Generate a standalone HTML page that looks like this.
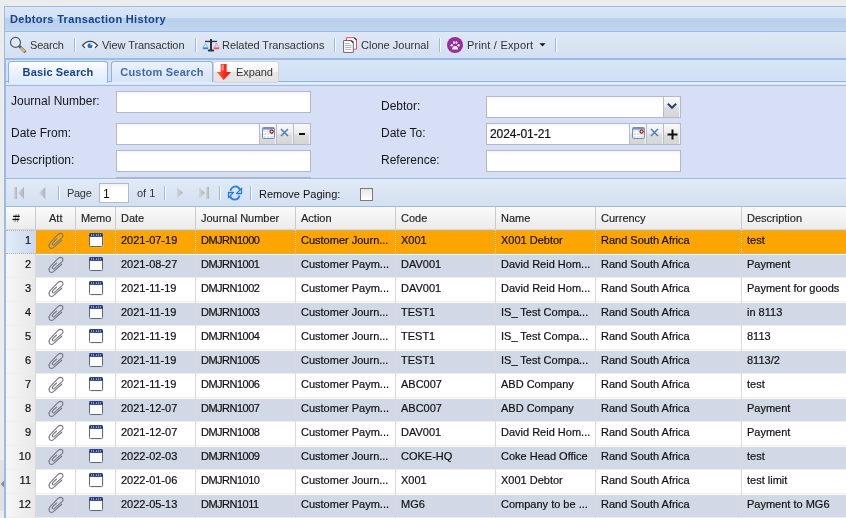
<!DOCTYPE html>
<html><head><meta charset="utf-8">
<style>
*{box-sizing:border-box}
html,body{margin:0;padding:0}
body{will-change:transform;width:846px;height:518px;overflow:hidden;position:relative;background:#ececec;font-family:"Liberation Sans",sans-serif;font-size:11px;color:#222}
.a{position:absolute}
.t{position:absolute;white-space:nowrap;line-height:13px;font-size:11px}
#hdr{left:4px;top:6px;width:860px;height:26px;border:1px solid #99bbe8;border-right:none;background:linear-gradient(#e6eef9 0,#d8e5f5 6%,#d3e1f4 44%,#bcd1ee 48%,#b8cfed 56%,#c3d6f0 100%)}
#tb{left:4px;top:32px;width:860px;height:27px;border-left:1px solid #99bbe8;border-bottom:1px solid #99bbe8;background:linear-gradient(#dfe8f5,#d3e0f2)}

#form{left:4px;top:86px;width:860px;height:93px;border-left:2px solid #99bbe8;border-bottom:1px solid #99bbe8;background:#d7dff7}
#pg{left:4px;top:179px;width:860px;height:28px;border-left:2px solid #99bbe8;border-bottom:1px solid #99bbe8;background:linear-gradient(#eef3fa 0,#e1eaf6 1px,#d3e0f1)}
#gh{left:4px;top:207px;width:860px;height:23px;border-left:2px solid #99bbe8;background:linear-gradient(#fbfbfb,#ebebeb);border-bottom:1px solid #d6d6d6}
#grid{left:4px;top:230px;width:860px;height:300px;border-left:2px solid #99bbe8;background:#fff}
.sep{position:absolute;width:2px;height:14px;border-left:1px solid #92bdf3;border-right:1px solid #fbfdff}
.tab{position:absolute;top:61px;height:22px;border:1px solid #8db2e3;border-bottom:none;border-radius:3px 3px 0 0;font-weight:bold;color:#15428b;text-align:center;line-height:20px}
.lbl{position:absolute;font-size:12px;line-height:14px;color:#161616;white-space:nowrap}
.inp{position:absolute;height:22px;border:1px solid #b5b8c8;background:linear-gradient(#f6f6f6 0,#fff 4px,#fff)}
.trg{position:absolute;width:17px;height:22px;border:1px solid #b5b8c8;border-right:none;border-left:1px solid #b8bcc8;background:linear-gradient(#fafafa 0,#ececec 45%,#dcdcdc 55%,#d6d6d6 100%);box-shadow:inset -1px 0 0 #f4f4f4}
.row{position:absolute;left:6px;width:860px;height:24px}
.cell{position:absolute;top:0;height:24px;line-height:24px;white-space:nowrap;font-size:11px;color:#222;padding-left:6px;overflow:hidden}
.vl{position:absolute;top:206px;width:1px;height:320px;background:#d0d0d0}

.r{position:absolute;left:6px;width:860px;height:24px;background:#fff;border-top:1px solid #fff;border-bottom:1px solid #ededed}
.r.alt{background:#d1d9e7}
.r.sel{background:#ffa500;border-top:1px dotted #b4b4b4;border-bottom:1px dotted #b4b4b4}
.rn{position:absolute;left:6px;width:30px;height:24px;background:linear-gradient(90deg,#f6f6f6,#e8e8e8);border-bottom:1px solid #ededed}
.rn.rns{background:linear-gradient(90deg,#e3ecf8,#c9d8ee);border-top:1px dotted #b4b4b4;border-bottom:1px dotted #b4b4b4}
.gh{color:#222;-webkit-text-stroke:0.15px #222}
.rt{color:#111;text-align:right;-webkit-text-stroke:0.2px #111}
.ct{color:#111;overflow:hidden;-webkit-text-stroke:0.2px #111}
.clip,.memo{position:absolute}
.tbt{color:#333}
.cl{position:absolute;top:207px;width:1px;height:311px;background:linear-gradient(#cbcbcb 0,#cbcbcb 22px,transparent 22px,transparent 47px,#dadada 47px)}
.cl::after{content:'';position:absolute;left:0;top:23px;width:1px;height:24px;background:repeating-linear-gradient(#d6d6d6 0 1px,transparent 1px 2px)}
</style></head><body>

<!-- header -->
<div id="hdr" class="a"></div>
<div class="t" style="left:10px;top:13px;font-weight:bold;color:#15428b;letter-spacing:0.32px">Debtors Transaction History</div>

<!-- toolbar -->
<div id="tb" class="a"></div>
<svg class="a" style="left:6px;top:33px" width="24" height="24" viewBox="0 0 24 24">
<circle cx="9.5" cy="9.4" r="5" fill="#e4e7ec" stroke="#4a5a80" stroke-width="1.2"/>
<path d="M13.2 13.1 L19.4 19.3" stroke="#4a5a80" stroke-width="2.8"/>
<path d="M14.6 14.5 L18.7 18.6" stroke="#e8b060" stroke-width="2.2"/>
</svg>
<svg class="a" style="left:78px;top:33px" width="24" height="24" viewBox="0 0 24 24">
<path d="M7.4 9.7 Q12 7.3 16.6 9.7 L19.4 12.3 L16.8 14.8 Q12 16.4 7.2 14.8 L4.6 12.3 Z" fill="#fff"/>
<path d="M7 14.9 L4.6 12.3 L7.4 9.7 Q12 7.2 16.6 9.7 L19.4 12.3 L17 14.9" fill="none" stroke="#3b3f46" stroke-width="1.25"/>
<circle cx="12" cy="12.8" r="2.5" fill="#1f6fd6"/>
<path d="M12.4 10.4 L14.8 11.2 L12.6 12.6 Z" fill="#fff"/>
</svg>
<svg class="a" style="left:198px;top:33px" width="24" height="24" viewBox="0 0 24 24">
<rect x="12" y="6" width="2" height="12" fill="#2a3344"/>
<rect x="7" y="7.8" width="12" height="1.3" fill="#2a3344"/>
<rect x="9.8" y="16.6" width="6.4" height="1.8" rx="0.8" fill="#2a3344"/>
<path d="M5.2 14.6 L7.5 10 L9.8 14.6" fill="none" stroke="#86b4e6" stroke-width="0.85"/>
<rect x="4.8" y="14.4" width="5.4" height="1.8" fill="#2f88e8"/>
<path d="M16.2 14.6 L18.5 10 L20.8 14.6" fill="none" stroke="#e3909a" stroke-width="0.85"/>
<rect x="15.8" y="14.4" width="5.4" height="1.8" fill="#e8505e"/>
</svg>
<svg class="a" style="left:338px;top:33px" width="24" height="24" viewBox="0 0 24 24">
<path d="M8.5 4.7 H16.5 L18.5 6.7 V16.2 H8.5 Z" fill="#fff" stroke="#ea4d5c" stroke-width="1"/>
<path d="M16.3 4.7 L18.5 6.9" stroke="#7a2a3a" stroke-width="1.4"/>
<path d="M5.6 7.5 H13.3 L15.3 9.5 V19.4 H5.6 Z" fill="#fff" stroke="#6a6a6a" stroke-width="1"/>
<path d="M13.2 7.5 L15.3 9.6" stroke="#3a4050" stroke-width="1.5"/>
<path d="M7.2 10.4h4.2M7.2 12.4h6.3M7.2 14.4h6.3M7.2 16.4h6.3" stroke="#9a9a9a" stroke-width="0.8"/>
</svg>
<svg class="a" style="left:442px;top:33px" width="24" height="24" viewBox="0 0 24 24">
<circle cx="13" cy="12" r="8" fill="#9c2c9e"/>
<ellipse cx="9.7" cy="12.2" rx="1.1" ry="1.3" fill="#fff"/>
<ellipse cx="12" cy="9.6" rx="0.9" ry="1.5" fill="#fff"/>
<ellipse cx="14.4" cy="9.6" rx="0.9" ry="1.5" fill="#fff"/>
<ellipse cx="16.6" cy="12.2" rx="1.1" ry="1.3" fill="#fff"/>
<path d="M10.2 16.6 Q10.2 13 13.1 13 Q16 13 16 16.6 Z" fill="#fff"/>
</svg>
<svg class="a" style="left:539px;top:43px" width="7" height="4" viewBox="0 0 7 4"><path d="M0.5 0.3 H6.5 L3.5 3.6 Z" fill="#111"/></svg>
<div class="t tbt" style="left:30px;top:39px;letter-spacing:-0.2px">Search</div>
<div class="sep" style="left:74px;top:38px"></div>
<div class="t tbt" style="left:102px;top:39px;letter-spacing:-0.07px">View Transaction</div>
<div class="sep" style="left:195px;top:38px"></div>
<div class="t tbt" style="left:222px;top:39px;letter-spacing:-0.05px">Related Transactions</div>
<div class="sep" style="left:334px;top:38px"></div>
<div class="t tbt" style="left:361px;top:39px">Clone Journal</div>
<div class="sep" style="left:439px;top:38px"></div>
<div class="t tbt" style="left:467px;top:39px;letter-spacing:0.2px">Print / Export</div>
<div class="sep" style="left:555px;top:38px"></div>

<!-- tabs -->
<div class="a" style="left:4px;top:59px;width:860px;height:23px;border-left:2px solid #99bbe8;border-top:1px solid #99bbe8;border-bottom:1px solid #8db2e3;background:linear-gradient(#d8e5f6,#d0dff4)"></div>
<div class="a" style="left:4px;top:82px;width:860px;height:4px;border-left:2px solid #99bbe8;border-bottom:1px solid #99bbe8;background:linear-gradient(#e2eefd 0,#e2eefd 66%,#dfe6f8 67%)"></div>
<div class="tab" style="left:8px;width:100px;height:22px;background:linear-gradient(#fdfeff 0,#eef4fc 40%,#deecfd 100%);letter-spacing:0.15px">Basic Search</div>
<div class="tab" style="left:111px;width:102px;height:21px;background:linear-gradient(#eaf1fb,#d6e4f7);color:#416aa6;letter-spacing:0.22px">Custom Search</div>
<div class="a" style="left:213px;top:61px;width:66px;height:22px;border:1px solid #d2d2d2;border-radius:3px;background:linear-gradient(#fdfdfd 0,#f4f4f4 48%,#e6e6e6 50%,#e4e4e4 100%)"></div>
<svg class="a" style="left:216px;top:63px" width="16" height="18" viewBox="0 0 16 18">
<defs><linearGradient id="ag" x1="0" x2="1" y1="0" y2="0"><stop offset="0" stop-color="#ff6a50"/><stop offset="0.5" stop-color="#ff2a1a"/><stop offset="1" stop-color="#e01010"/></linearGradient></defs>
<path d="M4.7 1 H10.6 V9 H15 L7.7 17 L0.8 9 H4.7 Z" fill="url(#ag)"/>
<rect x="5.6" y="1.5" width="2.2" height="6" fill="#ffb0a0" opacity="0.7"/>
</svg>
<div class="t tbt" style="left:236px;top:66px;letter-spacing:-0.1px">Expand</div>

<!-- form -->
<div id="form" class="a"></div>
<div class="lbl" style="left:11px;top:94px">Journal Number:</div>
<div class="inp" style="left:116px;top:91px;width:195px"></div>
<div class="lbl" style="left:11px;top:126px">Date From:</div>
<div class="inp" style="left:116px;top:123px;width:144px"></div>
<div class="trg" style="left:259px;top:123px"></div>
<div class="trg" style="left:276px;top:123px"></div>
<div class="trg" style="left:293px;top:123px;width:18px;border-right:1px solid #b5b8c8"></div>
<svg class="a" style="left:262px;top:127px" width="13" height="12" viewBox="0 0 13 12"><rect x="0.5" y="0.5" width="12" height="11" rx="1" fill="#dfe3ea" stroke="#7391c0"/><rect x="1" y="1" width="11" height="1.5" fill="#7391c0"/><path d="M1 5.5h11M1 8.5h11M4.5 3v8M8 3v8" stroke="#fff" stroke-width="1"/><circle cx="9.6" cy="4.6" r="1.6" fill="#fff" stroke="#a81010" stroke-width="1.2"/></svg>
<svg class="a" style="left:280px;top:128px" width="9" height="9" viewBox="0 0 9 9"><path d="M1 1L8 8M8 1L1 8" stroke="#4b7fc0" stroke-width="1.5"/></svg>
<div class="a" style="left:299px;top:133px;width:6px;height:2px;background:#111"></div>
<div class="lbl" style="left:11px;top:153px">Description:</div>
<div class="inp" style="left:116px;top:150px;width:195px"></div>
<div class="a" style="left:116px;top:177px;width:195px;height:1px;background:#b0b4c4"></div>

<div class="lbl" style="left:381px;top:99px">Debtor:</div>
<div class="inp" style="left:486px;top:96px;width:178px"></div>
<div class="trg" style="left:663px;top:96px;width:18px;border-right:1px solid #b5b8c8"></div>
<svg class="a" style="left:667px;top:103px" width="10" height="6" viewBox="0 0 10 6"><path d="M0.8 0.8L5 4.8L9.2 0.8" fill="none" stroke="#21407c" stroke-width="2"/></svg>
<div class="lbl" style="left:381px;top:126px">Date To:</div>
<div class="inp" style="left:486px;top:123px;width:144px"></div>
<div class="t" style="left:490px;top:128px;font-size:12px;color:#111;-webkit-text-stroke:0.2px #111;letter-spacing:-0.05px">2024-01-21</div>
<div class="trg" style="left:629px;top:123px"></div>
<div class="trg" style="left:646px;top:123px"></div>
<div class="trg" style="left:663px;top:123px;width:18px;border-right:1px solid #b5b8c8"></div>
<svg class="a" style="left:632px;top:127px" width="13" height="12" viewBox="0 0 13 12"><rect x="0.5" y="0.5" width="12" height="11" rx="1" fill="#dfe3ea" stroke="#7391c0"/><rect x="1" y="1" width="11" height="1.5" fill="#7391c0"/><path d="M1 5.5h11M1 8.5h11M4.5 3v8M8 3v8" stroke="#fff" stroke-width="1"/><circle cx="9.6" cy="4.6" r="1.6" fill="#fff" stroke="#a81010" stroke-width="1.2"/></svg>
<svg class="a" style="left:650px;top:128px" width="9" height="9" viewBox="0 0 9 9"><path d="M1 1L8 8M8 1L1 8" stroke="#4b7fc0" stroke-width="1.5"/></svg>
<svg class="a" style="left:667px;top:129px" width="11" height="11" viewBox="0 0 11 11"><path d="M5.5 0.5V10.5M0.5 5.5H10.5" stroke="#111" stroke-width="2"/></svg>
<div class="lbl" style="left:381px;top:153px">Reference:</div>
<div class="inp" style="left:486px;top:150px;width:195px"></div>

<!-- paging -->
<div id="pg" class="a"></div>
<svg class="a" style="left:10px;top:184px" width="200" height="18" viewBox="0 0 200 18">
<defs><linearGradient id="gg" x1="0" x2="1"><stop offset="0" stop-color="#d4d6da"/><stop offset="1" stop-color="#b0b2b7"/></linearGradient></defs>
<rect x="4" y="3" width="3" height="12" fill="url(#gg)"/>
<path d="M14 3 V15 L8 9 Z" fill="url(#gg)"/>
<path d="M35.3 3 V15 L29 9 Z" fill="url(#gg)"/>
<path d="M166.8 3 V14.5 L173 8.8 Z" fill="url(#gg)"/>
<path d="M189 3 V15 L195 9 Z" fill="url(#gg)"/>
<rect x="196" y="3" width="3" height="12" fill="url(#gg)"/>
</svg>
<svg class="a" style="left:224px;top:182px" width="22" height="22" viewBox="0 0 22 22">
<path d="M6.4 8.8 Q7.6 4.6 11.6 4.4 Q14.6 4.4 15.8 7.6" fill="none" stroke="#2a7fe2" stroke-width="1.9"/>
<path d="M17.6 6.2 V11.6 H12.4 Z" fill="#9fcbf6" stroke="#2277dd" stroke-width="1.1" stroke-linejoin="round"/>
<path d="M15.6 13.4 Q14.4 17.6 10.4 17.6 Q7.4 17.6 6.2 14.4" fill="none" stroke="#2a7fe2" stroke-width="1.9"/>
<path d="M4.4 10.4 V15.8 L9.6 10.4 Z" fill="#9fcbf6" stroke="#2277dd" stroke-width="1.1" stroke-linejoin="round"/>
</svg>
<div class="sep" style="left:58px;top:186px"></div>
<div class="t tbt" style="left:67px;top:187px;letter-spacing:-0.3px">Page</div>
<div class="a" style="left:99px;top:183px;width:30px;height:20px;border:1px solid #b5b8c8;background:linear-gradient(#f0f0f0,#fff 4px)"></div>
<div class="t" style="left:103px;top:188px;font-size:12px;color:#111">1</div>
<div class="t tbt" style="left:137px;top:187px">of 1</div>
<div class="sep" style="left:164px;top:186px"></div>
<div class="sep" style="left:219px;top:186px"></div>
<div class="sep" style="left:250px;top:186px"></div>
<div class="t" style="left:259px;top:188px;color:#111">Remove Paging:</div>
<div class="a" style="left:360px;top:188px;width:13px;height:13px;border:1px solid #7a7a7a;background:linear-gradient(#e6e6e6,#fff)"></div>

<!-- grid header -->
<div id="gh" class="a"></div>
<div id="grid" class="a"></div>
<svg width="0" height="0" style="position:absolute"><defs>
<g id="pc"><path d="M15.7 9.2 L7.5 16.6 Q5 18.6 3.4 16 Q2.4 13.6 4.2 11.6 L12.3 3.2 Q14.6 1.4 16.4 3.2 Q17.8 4.8 16.3 6.3 L8.3 13.6 Q7.1 14.5 6.4 13.4 Q6 12.3 7 11.4 L10.6 8" fill="none" stroke="#777a80" stroke-width="1.15" stroke-linecap="round"/></g>
<g id="mm"><rect x="4.5" y="3.5" width="13" height="13" rx="1" fill="#c6cfe4" opacity="0.6"/><rect x="3.5" y="2.5" width="13" height="13" rx="1" fill="#fff" stroke="#666a70" stroke-width="1"/><rect x="3.5" y="2.4" width="13" height="3.4" fill="#0f2c7a"/><path d="M5.6 3.2v1.6M7.6 3.2v1.6M10.3 3.2v1.6M12.3 3.2v1.6M14.3 3.2v1.6" stroke="#d8e0f0" stroke-width="0.9"/></g>
</defs></svg>
<!--GRID-->
<svg class="a" style="left:12px;top:213px" width="8" height="10" viewBox="0 0 8 10"><path d="M4.2 1 L2.9 9.2 M6.7 1 L5.4 9.2" stroke="#777" stroke-width="0.9"/><rect x="1" y="2.7" width="6.8" height="1.3" fill="#111"/><rect x="0.5" y="5.8" width="6.8" height="1.3" fill="#111"/></svg>
<div class="t gh" style="left:49px;top:212px">Att</div>
<div class="t gh" style="left:81px;top:212px;letter-spacing:-0.1px">Memo</div>
<div class="t gh" style="left:121px;top:212px">Date</div>
<div class="t gh" style="left:201px;top:212px">Journal Number</div>
<div class="t gh" style="left:301px;top:212px">Action</div>
<div class="t gh" style="left:401px;top:212px">Code</div>
<div class="t gh" style="left:501px;top:212px">Name</div>
<div class="t gh" style="left:601px;top:212px">Currency</div>
<div class="t gh" style="left:747px;top:212px">Description</div>
<div class="r sel" style="top:230px"></div>
<div class="rn rns" style="top:230px"></div>
<div class="t rt" style="right:815px;top:234px">1</div>
<svg class="clip" style="left:46px;top:231px" width="20" height="20" viewBox="0 0 20 20"><use href="#pc"/></svg>
<svg class="memo" style="left:86px;top:231px" width="20" height="20" viewBox="0 0 20 20"><use href="#mm"/></svg>
<div class="t ct" style="left:121px;top:234px;width:72px">2021-07-19</div>
<div class="t ct" style="left:201px;top:234px;width:92px;letter-spacing:-0.5px">DMJRN1000</div>
<div class="t ct" style="left:301px;top:234px;width:92px">Customer Journ...</div>
<div class="t ct" style="left:401px;top:234px;width:92px">X001</div>
<div class="t ct" style="left:501px;top:234px;width:92px">X001 Debtor</div>
<div class="t ct" style="left:601px;top:234px;width:138px">Rand South Africa</div>
<div class="t ct" style="left:747px;top:234px;width:103px">test</div>
<div class="r alt" style="top:254px"></div>
<div class="rn" style="top:254px"></div>
<div class="t rt" style="right:815px;top:258px">2</div>
<svg class="clip" style="left:46px;top:255px" width="20" height="20" viewBox="0 0 20 20"><use href="#pc"/></svg>
<svg class="memo" style="left:86px;top:255px" width="20" height="20" viewBox="0 0 20 20"><use href="#mm"/></svg>
<div class="t ct" style="left:121px;top:258px;width:72px">2021-08-27</div>
<div class="t ct" style="left:201px;top:258px;width:92px;letter-spacing:-0.5px">DMJRN1001</div>
<div class="t ct" style="left:301px;top:258px;width:92px">Customer Paym...</div>
<div class="t ct" style="left:401px;top:258px;width:92px">DAV001</div>
<div class="t ct" style="left:501px;top:258px;width:92px">David Reid Hom...</div>
<div class="t ct" style="left:601px;top:258px;width:138px">Rand South Africa</div>
<div class="t ct" style="left:747px;top:258px;width:103px">Payment</div>
<div class="r" style="top:278px"></div>
<div class="rn" style="top:278px"></div>
<div class="t rt" style="right:815px;top:282px">3</div>
<svg class="clip" style="left:46px;top:279px" width="20" height="20" viewBox="0 0 20 20"><use href="#pc"/></svg>
<svg class="memo" style="left:86px;top:279px" width="20" height="20" viewBox="0 0 20 20"><use href="#mm"/></svg>
<div class="t ct" style="left:121px;top:282px;width:72px">2021-11-19</div>
<div class="t ct" style="left:201px;top:282px;width:92px;letter-spacing:-0.5px">DMJRN1002</div>
<div class="t ct" style="left:301px;top:282px;width:92px">Customer Paym...</div>
<div class="t ct" style="left:401px;top:282px;width:92px">DAV001</div>
<div class="t ct" style="left:501px;top:282px;width:92px">David Reid Hom...</div>
<div class="t ct" style="left:601px;top:282px;width:138px">Rand South Africa</div>
<div class="t ct" style="left:747px;top:282px;width:103px">Payment for goods</div>
<div class="r alt" style="top:302px"></div>
<div class="rn" style="top:302px"></div>
<div class="t rt" style="right:815px;top:306px">4</div>
<svg class="clip" style="left:46px;top:303px" width="20" height="20" viewBox="0 0 20 20"><use href="#pc"/></svg>
<svg class="memo" style="left:86px;top:303px" width="20" height="20" viewBox="0 0 20 20"><use href="#mm"/></svg>
<div class="t ct" style="left:121px;top:306px;width:72px">2021-11-19</div>
<div class="t ct" style="left:201px;top:306px;width:92px;letter-spacing:-0.5px">DMJRN1003</div>
<div class="t ct" style="left:301px;top:306px;width:92px">Customer Journ...</div>
<div class="t ct" style="left:401px;top:306px;width:92px">TEST1</div>
<div class="t ct" style="left:501px;top:306px;width:92px">IS_ Test Compa...</div>
<div class="t ct" style="left:601px;top:306px;width:138px">Rand South Africa</div>
<div class="t ct" style="left:747px;top:306px;width:103px">in 8113</div>
<div class="r" style="top:326px"></div>
<div class="rn" style="top:326px"></div>
<div class="t rt" style="right:815px;top:330px">5</div>
<svg class="clip" style="left:46px;top:327px" width="20" height="20" viewBox="0 0 20 20"><use href="#pc"/></svg>
<svg class="memo" style="left:86px;top:327px" width="20" height="20" viewBox="0 0 20 20"><use href="#mm"/></svg>
<div class="t ct" style="left:121px;top:330px;width:72px">2021-11-19</div>
<div class="t ct" style="left:201px;top:330px;width:92px;letter-spacing:-0.5px">DMJRN1004</div>
<div class="t ct" style="left:301px;top:330px;width:92px">Customer Journ...</div>
<div class="t ct" style="left:401px;top:330px;width:92px">TEST1</div>
<div class="t ct" style="left:501px;top:330px;width:92px">IS_ Test Compa...</div>
<div class="t ct" style="left:601px;top:330px;width:138px">Rand South Africa</div>
<div class="t ct" style="left:747px;top:330px;width:103px">8113</div>
<div class="r alt" style="top:350px"></div>
<div class="rn" style="top:350px"></div>
<div class="t rt" style="right:815px;top:354px">6</div>
<svg class="clip" style="left:46px;top:351px" width="20" height="20" viewBox="0 0 20 20"><use href="#pc"/></svg>
<svg class="memo" style="left:86px;top:351px" width="20" height="20" viewBox="0 0 20 20"><use href="#mm"/></svg>
<div class="t ct" style="left:121px;top:354px;width:72px">2021-11-19</div>
<div class="t ct" style="left:201px;top:354px;width:92px;letter-spacing:-0.5px">DMJRN1005</div>
<div class="t ct" style="left:301px;top:354px;width:92px">Customer Journ...</div>
<div class="t ct" style="left:401px;top:354px;width:92px">TEST1</div>
<div class="t ct" style="left:501px;top:354px;width:92px">IS_ Test Compa...</div>
<div class="t ct" style="left:601px;top:354px;width:138px">Rand South Africa</div>
<div class="t ct" style="left:747px;top:354px;width:103px">8113/2</div>
<div class="r" style="top:374px"></div>
<div class="rn" style="top:374px"></div>
<div class="t rt" style="right:815px;top:378px">7</div>
<svg class="clip" style="left:46px;top:375px" width="20" height="20" viewBox="0 0 20 20"><use href="#pc"/></svg>
<svg class="memo" style="left:86px;top:375px" width="20" height="20" viewBox="0 0 20 20"><use href="#mm"/></svg>
<div class="t ct" style="left:121px;top:378px;width:72px">2021-11-19</div>
<div class="t ct" style="left:201px;top:378px;width:92px;letter-spacing:-0.5px">DMJRN1006</div>
<div class="t ct" style="left:301px;top:378px;width:92px">Customer Paym...</div>
<div class="t ct" style="left:401px;top:378px;width:92px">ABC007</div>
<div class="t ct" style="left:501px;top:378px;width:92px">ABD Company</div>
<div class="t ct" style="left:601px;top:378px;width:138px">Rand South Africa</div>
<div class="t ct" style="left:747px;top:378px;width:103px">test</div>
<div class="r alt" style="top:398px"></div>
<div class="rn" style="top:398px"></div>
<div class="t rt" style="right:815px;top:402px">8</div>
<svg class="clip" style="left:46px;top:399px" width="20" height="20" viewBox="0 0 20 20"><use href="#pc"/></svg>
<svg class="memo" style="left:86px;top:399px" width="20" height="20" viewBox="0 0 20 20"><use href="#mm"/></svg>
<div class="t ct" style="left:121px;top:402px;width:72px">2021-12-07</div>
<div class="t ct" style="left:201px;top:402px;width:92px;letter-spacing:-0.5px">DMJRN1007</div>
<div class="t ct" style="left:301px;top:402px;width:92px">Customer Paym...</div>
<div class="t ct" style="left:401px;top:402px;width:92px">ABC007</div>
<div class="t ct" style="left:501px;top:402px;width:92px">ABD Company</div>
<div class="t ct" style="left:601px;top:402px;width:138px">Rand South Africa</div>
<div class="t ct" style="left:747px;top:402px;width:103px">Payment</div>
<div class="r" style="top:422px"></div>
<div class="rn" style="top:422px"></div>
<div class="t rt" style="right:815px;top:426px">9</div>
<svg class="clip" style="left:46px;top:423px" width="20" height="20" viewBox="0 0 20 20"><use href="#pc"/></svg>
<svg class="memo" style="left:86px;top:423px" width="20" height="20" viewBox="0 0 20 20"><use href="#mm"/></svg>
<div class="t ct" style="left:121px;top:426px;width:72px">2021-12-07</div>
<div class="t ct" style="left:201px;top:426px;width:92px;letter-spacing:-0.5px">DMJRN1008</div>
<div class="t ct" style="left:301px;top:426px;width:92px">Customer Paym...</div>
<div class="t ct" style="left:401px;top:426px;width:92px">DAV001</div>
<div class="t ct" style="left:501px;top:426px;width:92px">David Reid Hom...</div>
<div class="t ct" style="left:601px;top:426px;width:138px">Rand South Africa</div>
<div class="t ct" style="left:747px;top:426px;width:103px">Payment</div>
<div class="r alt" style="top:446px"></div>
<div class="rn" style="top:446px"></div>
<div class="t rt" style="right:815px;top:450px">10</div>
<svg class="clip" style="left:46px;top:447px" width="20" height="20" viewBox="0 0 20 20"><use href="#pc"/></svg>
<svg class="memo" style="left:86px;top:447px" width="20" height="20" viewBox="0 0 20 20"><use href="#mm"/></svg>
<div class="t ct" style="left:121px;top:450px;width:72px">2022-02-03</div>
<div class="t ct" style="left:201px;top:450px;width:92px;letter-spacing:-0.5px">DMJRN1009</div>
<div class="t ct" style="left:301px;top:450px;width:92px">Customer Journ...</div>
<div class="t ct" style="left:401px;top:450px;width:92px">COKE-HQ</div>
<div class="t ct" style="left:501px;top:450px;width:92px">Coke Head Office</div>
<div class="t ct" style="left:601px;top:450px;width:138px">Rand South Africa</div>
<div class="t ct" style="left:747px;top:450px;width:103px">test</div>
<div class="r" style="top:470px"></div>
<div class="rn" style="top:470px"></div>
<div class="t rt" style="right:815px;top:474px">11</div>
<svg class="clip" style="left:46px;top:471px" width="20" height="20" viewBox="0 0 20 20"><use href="#pc"/></svg>
<svg class="memo" style="left:86px;top:471px" width="20" height="20" viewBox="0 0 20 20"><use href="#mm"/></svg>
<div class="t ct" style="left:121px;top:474px;width:72px">2022-01-06</div>
<div class="t ct" style="left:201px;top:474px;width:92px;letter-spacing:-0.5px">DMJRN1010</div>
<div class="t ct" style="left:301px;top:474px;width:92px">Customer Journ...</div>
<div class="t ct" style="left:401px;top:474px;width:92px">X001</div>
<div class="t ct" style="left:501px;top:474px;width:92px">X001 Debtor</div>
<div class="t ct" style="left:601px;top:474px;width:138px">Rand South Africa</div>
<div class="t ct" style="left:747px;top:474px;width:103px">test limit</div>
<div class="r alt" style="top:494px"></div>
<div class="rn" style="top:494px"></div>
<div class="t rt" style="right:815px;top:498px">12</div>
<svg class="clip" style="left:46px;top:495px" width="20" height="20" viewBox="0 0 20 20"><use href="#pc"/></svg>
<svg class="memo" style="left:86px;top:495px" width="20" height="20" viewBox="0 0 20 20"><use href="#mm"/></svg>
<div class="t ct" style="left:121px;top:498px;width:72px">2022-05-13</div>
<div class="t ct" style="left:201px;top:498px;width:92px;letter-spacing:-0.5px">DMJRN1011</div>
<div class="t ct" style="left:301px;top:498px;width:92px">Customer Paym...</div>
<div class="t ct" style="left:401px;top:498px;width:92px">MG6</div>
<div class="t ct" style="left:501px;top:498px;width:92px">Company to be ...</div>
<div class="t ct" style="left:601px;top:498px;width:138px">Rand South Africa</div>
<div class="t ct" style="left:747px;top:498px;width:103px">Payment to MG6</div>
<!--/GRID-->
<div class="cl" style="left:35px"></div>
<div class="cl" style="left:75px"></div>
<div class="cl" style="left:115px"></div>
<div class="cl" style="left:195px"></div>
<div class="cl" style="left:295px"></div>
<div class="cl" style="left:395px"></div>
<div class="cl" style="left:495px"></div>
<div class="cl" style="left:595px"></div>
<div class="cl" style="left:741px"></div>
<div class="a" style="left:0;top:460px;width:4px;height:51px;background:#e1e1e1"></div>
<svg class="a" style="left:0;top:479px" width="4" height="10" viewBox="0 0 4 10"><path d="M4 1.5 V8.5 L0.8 5 Z" fill="#8a8a8a"/></svg>
</body></html>
